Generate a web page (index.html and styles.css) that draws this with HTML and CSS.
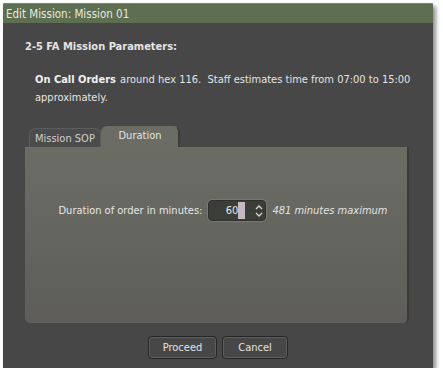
FILE: index.html
```html
<!DOCTYPE html>
<html lang="en">
<head>
  <meta charset="UTF-8" />
  <title>Edit Mission</title>
  <link rel="stylesheet" href="styles.css">
</head>
<body>
  <div class="dialog">
    <div class="titlebar">Edit Mission: Mission 01</div>

    <div class="content">
      <h2>2-5 FA Mission Parameters:</h2>
      <p class="orders"><strong>On Call Orders</strong> around hex 116.&nbsp; Staff estimates time from 07:00 to 15:00 approximately.</p>

      <div class="tabs">
        <div class="tab">Mission SOP</div>
        <div class="tab active">Duration</div>
      </div>
      <div class="panel">
        <div class="row">
          <label>Duration of order in minutes:</label>
          <div class="spinbox">
            <span class="value">60</span><span class="caret"></span>
            <svg class="arrows" width="8" height="14" viewBox="0 0 8 14">
              <path d="M1 5 L4 2 L7 5" fill="none" stroke="#d8d8d8" stroke-width="1.3"/>
              <path d="M1 9 L4 12 L7 9" fill="none" stroke="#d8d8d8" stroke-width="1.3"/>
            </svg>
          </div>
          <span class="hint">481 minutes maximum</span>
        </div>
      </div>

      <div class="buttons">
        <button class="proceed">Proceed</button>
        <button class="cancel">Cancel</button>
      </div>
    </div>
  </div>
</body>
</html>
```

FILE: styles.css
```css
body {
  background-color: white;
  margin: 0;
  padding: 0;
  font-family: 'DejaVu Sans Condensed', 'DejaVu Sans', sans-serif;
  font-stretch: condensed;
  font-size: 11px;
}

.dialog {
  margin: 3px 0 0 3px;
  width: 430px;
  height: 365px;
  background-color: #474747;
  box-shadow: 3px 3px 4px rgba(0, 0, 0, 0.45);
  border-radius: 2px 2px 0 0;
}

.titlebar {
  background-color: #5e6e50;
  color: #e6e9e2;
  height: 20px;
  line-height: 20px;
  padding-left: 3px;
  font-size: 11.5px;
  border-top: 1px solid #7a8a6c;
  border-radius: 2px 2px 0 0;
  box-sizing: border-box;
}

.content {
  padding: 17px 0 0 22px;
}

.content h2 {
  margin: 0;
  color: #e4e4e4;
  font-size: 11px;
  font-weight: bold;
  line-height: 14px;
}

.orders {
  margin: 17px 0 0 10px;
  width: 380px;
  color: #e4e4e4;
  line-height: 18px;
}

.orders strong {
  color: #f0f0f0;
  margin-right: 1px;
}

.tabs {
  display: flex;
  margin: 20px 0 0 4px;
  height: 20px;
  align-items: flex-end;
}

.tab {
  height: 18px;
  line-height: 19px;
  width: 60px;
  padding: 0 5px;
  background-color: #4c4c4c;
  color: #d0d0d0;
  border: 1px solid #5c5c5c;
  border-bottom: none;
  border-radius: 6px 6px 0 0;
}

.tab.active {
  height: 20px;
  line-height: 17px;
  width: 66px;
  text-align: center;
  background-color: #6b6d65;
  color: #e2e2e2;
  border-color: #6b6d65;
  border-right: 2px solid #3c3c3a;
}

.panel {
  width: 382px;
  height: 176px;
  background: linear-gradient(#6b6d65, #5e5d59);
  border-right: 2px solid #3b3b3a;
  border-radius: 0 0 5px 5px;
}

.row {
  display: flex;
  align-items: center;
  justify-content: center;
  gap: 6px;
  padding-top: 53px;
  padding-left: 14px;
  color: #e6e6e6;
}

.spinbox {
  display: flex;
  align-items: center;
  width: 58px;
  height: 21px;
  box-sizing: border-box;
  background-color: #3b3e38;
  border: 1px solid #2f302d;
  border-radius: 4px;
  box-shadow: 0 0 0 1px #777870;
  padding-left: 4px;
}

.spinbox .value {
  width: 25px;
  text-align: right;
  color: #e6e6e6;
}

.spinbox .caret {
  width: 7px;
  height: 17px;
  background-color: #c4b9c3;
}

.spinbox .arrows {
  margin-left: 10px;
}

.hint {
  font-style: italic;
  color: #e2e2e2;
}

.buttons {
  display: flex;
  justify-content: center;
  gap: 5px;
  margin-top: 13px;
  padding-right: 22px;
}

.buttons button {
  height: 23px;
  font-family: 'DejaVu Sans Condensed', 'DejaVu Sans', sans-serif;
  font-stretch: condensed;
  font-size: 11px;
  color: #e2e2e2;
  background-color: #474747;
  border: 1px solid #262626;
  border-radius: 4px;
  box-shadow: inset 0 0 0 1px #5e5e5e;
}

.proceed {
  width: 69px;
}

.cancel {
  width: 66px;
}
```
